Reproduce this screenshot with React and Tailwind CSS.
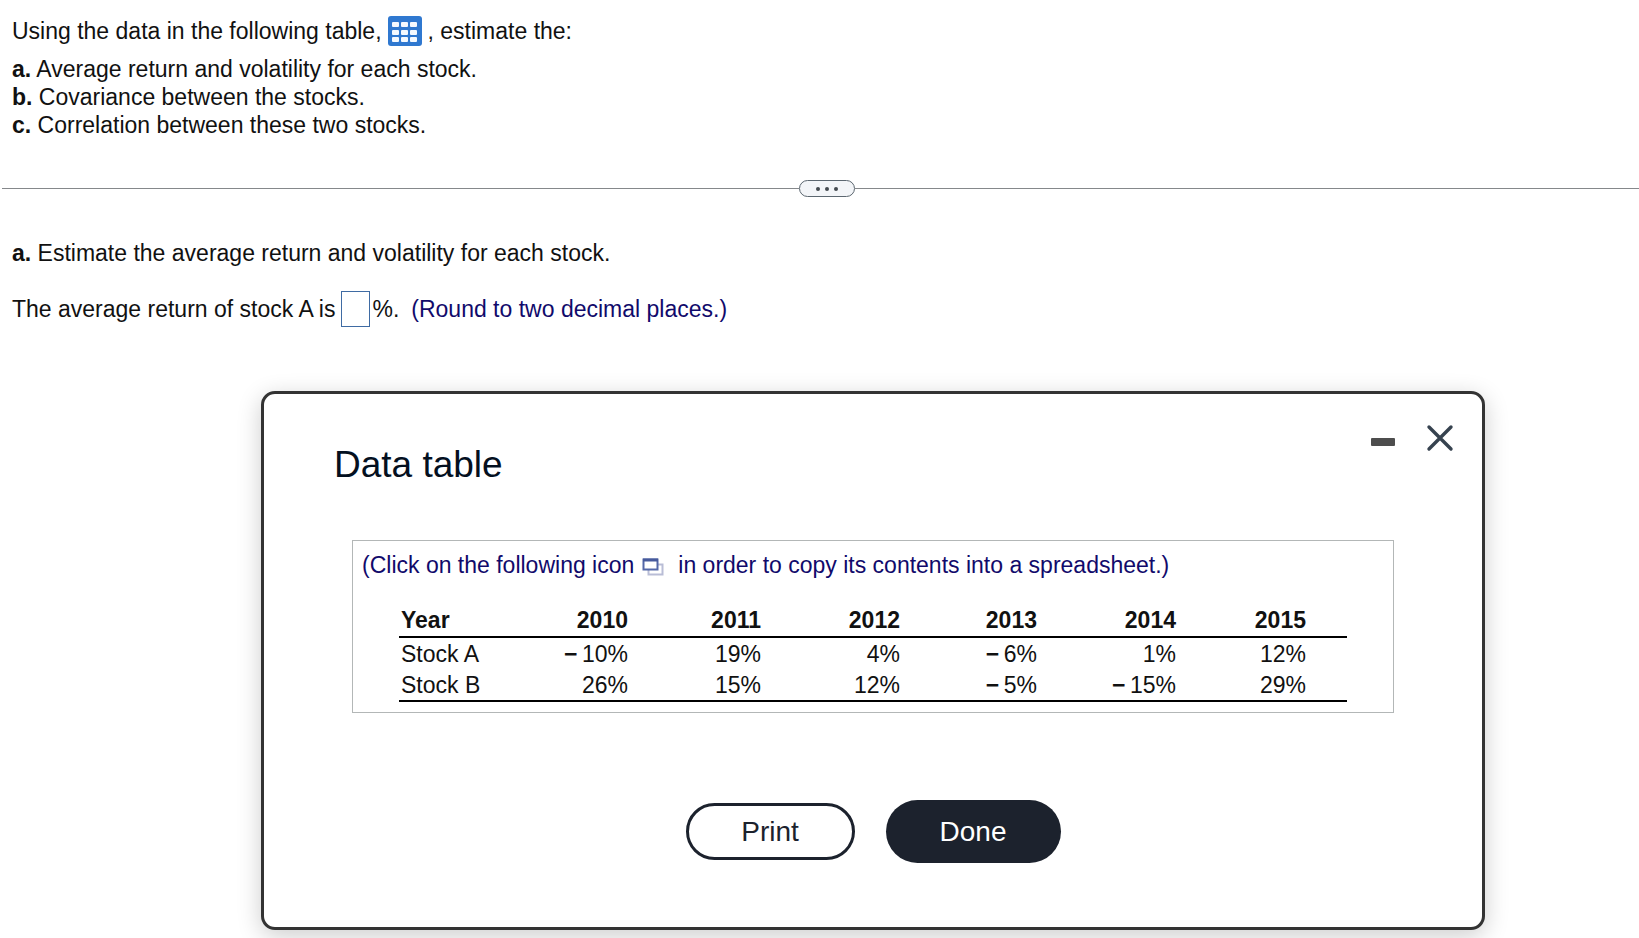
import { useState } from 'react';

const years = ['2010', '2011', '2012', '2013', '2014', '2015'];

const stocks = [
  { name: 'Stock A', returns: [-10, 19, 4, -6, 1, 12] },
  { name: 'Stock B', returns: [26, 15, 12, -5, -15, 29] },
];

// negative values get a real minus sign with a thin space after it
function Return({ value }) {
  return (
    <>
      {value < 0 && <span className="font-bold">{'\u2212\u2009'}</span>}
      {Math.abs(value)}%
    </>
  );
}

function TableIcon() {
  return (
    <svg width="34" height="30" viewBox="0 0 34 30" aria-hidden="true">
      <rect width="34" height="30" rx="3" fill="#2f78d0" />
      {[6, 14, 21].map(y =>
        [4, 13, 22].map(x => (
          <rect key={`${x}-${y}`} x={x} y={y} width="7" height="5" rx="1" fill="#f4f9ff" />
        ))
      )}
    </svg>
  );
}

function CopyIcon() {
  return (
    <svg width="22" height="18" viewBox="0 0 22 18" aria-hidden="true">
      <rect x="6.5" y="6.5" width="14" height="10" fill="#fff" stroke="#b9bdd6" strokeWidth="2" />
      <rect x="1.5" y="1.5" width="14" height="10" fill="#fff" stroke="#5468a8" strokeWidth="2" />
      <path d="M1 2h15" stroke="#475a9c" strokeWidth="3" />
    </svg>
  );
}

function Divider() {
  return (
    <div className="-mr-3 mt-[41px] flex items-center pl-0.5">
      <div className="h-px flex-1 bg-[#85888b]" />
      <button
        type="button"
        aria-label="Resize"
        className="flex h-[17px] w-14 items-center justify-center gap-[5px] rounded-full border border-[#5c6770] bg-[#f3f5f8]"
      >
        <span className="size-1 rounded-full bg-[#444a50]" />
        <span className="size-1 rounded-full bg-[#444a50]" />
        <span className="size-1 rounded-full bg-[#444a50]" />
      </button>
      <div className="h-px flex-1 bg-[#85888b]" />
    </div>
  );
}

function DataTable() {
  return (
    <table className="w-full border-b-2 border-black text-right leading-7">
      <colgroup>
        <col />
        <col className="w-[133px]" />
        <col className="w-[133px]" />
        <col className="w-[139px]" />
        <col className="w-[137px]" />
        <col className="w-[139px]" />
        <col className="w-[130px]" />
      </colgroup>
      <thead>
        <tr className="border-b-2 border-black">
          <th scope="col" className="pb-0.5 pl-0.5 text-left font-bold">
            Year
          </th>
          {years.map(year => (
            <th key={year} scope="col" className="pr-[41px] pb-0.5 font-bold">
              {year}
            </th>
          ))}
        </tr>
      </thead>
      <tbody>
        {stocks.map(stock => (
          <tr key={stock.name}>
            <th scope="row" className="pt-0.5 pb-px pl-0.5 text-left font-normal">
              {stock.name}
            </th>
            {stock.returns.map((value, i) => (
              <td key={years[i]} className="pt-0.5 pr-[41px] pb-px whitespace-nowrap">
                <Return value={value} />
              </td>
            ))}
          </tr>
        ))}
      </tbody>
    </table>
  );
}

function DataDialog({ onClose }) {
  return (
    <section
      role="dialog"
      aria-labelledby="dialog-title"
      className="mt-16 mr-[154px] ml-[261px] rounded-[14px] border-3 border-[#333] bg-white pt-7 pb-16 shadow-[0_6px_24px_rgba(0,0,0,0.2)]"
    >
      <div className="flex justify-between pr-7 pl-[70px]">
        <h2 id="dialog-title" className="mt-[19px] text-[37px] leading-12 text-[#04101f]">
          Data table
        </h2>
        <div className="flex h-8 items-center gap-[30px]">
          <button type="button" aria-label="Minimize" className="flex h-8 items-center">
            <svg width="26" height="26" viewBox="0 0 26 26">
              <rect x="1" y="13" width="24" height="8" rx="1" fill="#4d4d4d" />
            </svg>
          </button>
          <button type="button" aria-label="Close" onClick={onClose}>
            <svg width="28" height="28" viewBox="0 0 28 28">
              <path d="M3 3l22 22M25 3L3 25" stroke="#36424f" strokeWidth="3.4" strokeLinecap="round" />
            </svg>
          </button>
        </div>
      </div>

      <div className="mr-[88px] ml-22 mt-[51px] border border-[#b3b7b7] px-[9px] pt-2 pb-2.5">
        <p className="leading-8 text-[#110a6b]">
          (Click on the following icon
          <button type="button" aria-label="Copy" className="mr-3.5 ml-2 inline-block align-middle">
            <CopyIcon />
          </button>
          in order to copy its contents into a spreadsheet.)
        </p>
        <div className="mx-[37px] mt-[25px]">
          <DataTable />
        </div>
      </div>

      <div className="mt-[87px] flex items-center justify-center gap-[31px] text-[28px]">
        <button
          type="button"
          className="h-[57px] w-[169px] rounded-full border-3 border-[#1c222d] bg-white text-[#1c222d]"
        >
          Print
        </button>
        <button
          type="button"
          onClick={onClose}
          className="h-[63px] w-[175px] rounded-full bg-[#1c222d] text-white"
        >
          Done
        </button>
      </div>
    </section>
  );
}

export default function App() {
  const [open, setOpen] = useState(true);
  const [answer, setAnswer] = useState('');

  return (
    <main className="min-h-screen overflow-hidden bg-white pb-2 font-['Liberation_Sans',Arial,sans-serif] text-[23px] leading-7 text-[#111]">
      <div className="px-3 pt-[15px]">
        <p className="flex items-center leading-8">
          Using the data in the following table,
          <button
            type="button"
            aria-label="Open data table"
            className="mx-1.5"
            onClick={() => setOpen(true)}
          >
            <TableIcon />
          </button>
          , estimate the:
        </p>
        <p className="mt-2">
          <b>a.</b> Average return and volatility for each stock.
        </p>
        <p>
          <b>b.</b> Covariance between the stocks.
        </p>
        <p>
          <b>c.</b> Correlation between these two stocks.
        </p>
      </div>

      <Divider />

      <div className="px-3 pt-[42px]">
        <p>
          <b>a.</b> Estimate the average return and volatility for each stock.
        </p>
        <div className="mt-6 flex items-center">
          <label htmlFor="average-return">The average return of stock A is</label>
          <input
            id="average-return"
            type="text"
            value={answer}
            onChange={e => setAnswer(e.target.value)}
            className="mr-0.5 ml-1.5 h-9 w-[29px] border border-[#3f6ba3] text-center"
          />
          <span>%.</span>
          <span className="ml-3 text-[#110a6b]">(Round to two decimal places.)</span>
        </div>
      </div>

      {open && <DataDialog onClose={() => setOpen(false)} />}
    </main>
  );
}
